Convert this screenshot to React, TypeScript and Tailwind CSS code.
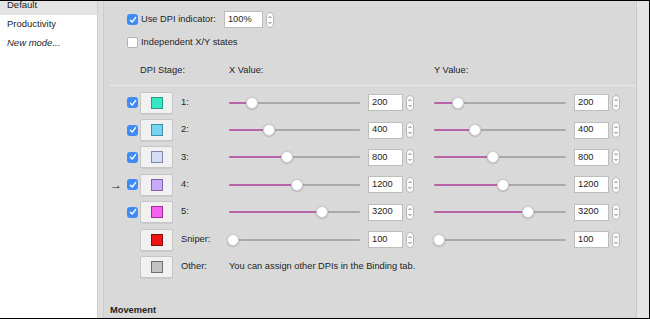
import React from 'react';

type Stage = {
  id: string;
  label: string;
  color: string;
  edge: string;
  value: string;
  pos: number;
  checkable: boolean;
  current?: boolean;
};

const stages: Stage[] = [
  { id: 's1', label: '1:', color: '#34e8c4', edge: '#2a9c86', value: '200', pos: 23, checkable: true },
  { id: 's2', label: '2:', color: '#72d6f0', edge: '#3f8fa6', value: '400', pos: 40, checkable: true },
  { id: 's3', label: '3:', color: '#d4dcf8', edge: '#7d85a8', value: '800', pos: 58, checkable: true },
  { id: 's4', label: '4:', color: '#c9aaf7', edge: '#7c62a8', value: '1200', pos: 68, checkable: true, current: true },
  { id: 's5', label: '5:', color: '#f761ef', edge: '#9c2f96', value: '3200', pos: 93, checkable: true },
  { id: 'sn', label: 'Sniper:', color: '#ee1414', edge: '#8a0c0c', value: '100', pos: 4, checkable: false },
];

function Checkbox({ checked }: { checked: boolean }) {
  if (!checked) {
    return <div className="h-[11px] w-[11px] shrink-0 rounded-[2px] border border-[#b3b3b3] bg-white" />;
  }
  return (
    <div className="flex h-[11px] w-[11px] shrink-0 items-center justify-center rounded-[3px] bg-[#3f8af4]">
      <svg width="8" height="8" viewBox="0 0 8 8">
        <path d="M1.4 4.2 L3.2 6 L6.6 1.6" fill="none" stroke="white" strokeWidth="1.4" strokeLinecap="round" strokeLinejoin="round" />
      </svg>
    </div>
  );
}

function Stepper() {
  return (
    <svg width="8" height="16" viewBox="0 0 8 16" className="shrink-0">
      <rect x="0.5" y="0.5" width="7" height="15" rx="3.5" fill="#fbfbfb" stroke="#b8b8b8" />
      <path d="M2.5 6 L4 4.5 L5.5 6" fill="none" stroke="#6a6a6a" strokeWidth="0.9" />
      <path d="M2.5 10 L4 11.5 L5.5 10" fill="none" stroke="#6a6a6a" strokeWidth="0.9" />
    </svg>
  );
}

function NumberBox({ value }: { value: string }) {
  return (
    <div className="flex items-center">
      <div className="flex h-[17px] w-[35px] items-center border border-[#bdbdbd] bg-white pl-[3px] text-[#222]">{value}</div>
      <div className="ml-[3px]">
        <Stepper />
      </div>
    </div>
  );
}

function Slider({ pos, width }: { pos: number; width: number }) {
  return (
    <div className="relative flex h-[14px] items-center" style={{ width }}>
      <div className="h-[2px] w-full rounded-full bg-[#a9a9a9]" />
      <div className="absolute left-0 top-[6px] h-[2px] rounded-full bg-[#b764a8]" style={{ width: pos }} />
      <div
        className="absolute top-[1px] h-[12px] w-[12px] rounded-full border border-[#cfcfcf] bg-white shadow-[0_0.5px_1.5px_rgba(0,0,0,0.3)]"
        style={{ left: pos - 6 }}
      />
    </div>
  );
}

function Swatch({ color, edge }: { color: string; edge: string }) {
  return (
    <div className="flex h-[22px] w-[33px] shrink-0 items-center justify-center rounded-[2px] border border-[#c6c6c6] bg-[#f1f1f1] shadow-[0_0.5px_0.5px_rgba(0,0,0,0.12)]">
      <div className="h-[12px] w-[12px] border" style={{ backgroundColor: color, borderColor: edge }} />
    </div>
  );
}

export default function App() {
  return (
    <div
      className="flex h-[319px] w-[650px] overflow-hidden border-r border-b border-t border-black bg-[#d9d9d9] text-[9.3px] text-[#1f1f1f]"
      style={{ fontFamily: '"Liberation Sans", Arial, sans-serif' }}
    >
      <div className="w-[98px] shrink-0 border-r border-[#cdcdcd] bg-white text-[9.5px]">
        <div className="-mt-[5px] flex h-[19px] items-center bg-[#e4e4e4] pl-[7px]">Default</div>
        <div className="flex h-[19px] items-center pl-[7px]">Productivity</div>
        <div className="flex h-[19px] items-center pl-[7px] italic">New mode...</div>
      </div>

      <div className="w-[6px] shrink-0 border-r border-[#cbcbcb] bg-[#dedede]" />

      <div className="w-[532px] shrink-0 pl-[6px] pt-[10px]">
        <div className="flex h-[17px] items-center pl-[17px]">
          <Checkbox checked />
          <span className="ml-[3px]">Use DPI indicator:</span>
          <div className="ml-[8px] flex items-center">
            <div className="flex h-[17px] w-[39px] items-center border border-[#bdbdbd] bg-white pl-[3px]">100%</div>
            <div className="ml-[3px]">
              <Stepper />
            </div>
          </div>
        </div>

        <div className="mt-[8px] flex h-[13px] items-center pl-[17px]">
          <Checkbox checked={false} />
          <span className="ml-[3px]">Independent X/Y states</span>
        </div>

        <div className="mt-[16px] flex h-[12px] items-center pl-[30px]">
          <span className="w-[89px]">DPI Stage:</span>
          <span className="w-[205px]">X Value:</span>
          <span>Y Value:</span>
        </div>

        <div className="mt-[8px] border-t border-[#e9e9e9]" />

        <div className="mt-[3px]">
          {stages.map((s) => (
            <div key={s.id} className="flex h-[27.4px] items-center">
              <div className="w-[17px] text-[12px] leading-none">{s.current ? '→' : ''}</div>
              <div className="w-[11px]">{s.checkable ? <Checkbox checked /> : null}</div>
              <div className="ml-[2px]">
                <Swatch color={s.color} edge={s.edge} />
              </div>
              <div className="ml-[8px] w-[48px]">{s.label}</div>
              <Slider pos={s.pos} width={131} />
              <div className="ml-[8px]">
                <NumberBox value={s.value} />
              </div>
              <div className="ml-[20px]">
                <Slider pos={s.pos + 1} width={132} />
              </div>
              <div className="ml-[8px]">
                <NumberBox value={s.value} />
              </div>
            </div>
          ))}
          <div className="flex h-[27.4px] items-center">
            <div className="w-[17px]" />
            <div className="w-[11px]" />
            <div className="ml-[2px]">
              <Swatch color="#c2c2c2" edge="#6e6e6e" />
            </div>
            <div className="ml-[8px] w-[48px]">Other:</div>
            <span>You can assign other DPIs in the Binding tab.</span>
          </div>
        </div>

        <div className="mt-[23px] font-bold">Movement</div>
      </div>

      <div className="w-[13px] shrink-0 border-l border-[#c9c9c9] bg-[#e4e4e4]" />
    </div>
  );
}
